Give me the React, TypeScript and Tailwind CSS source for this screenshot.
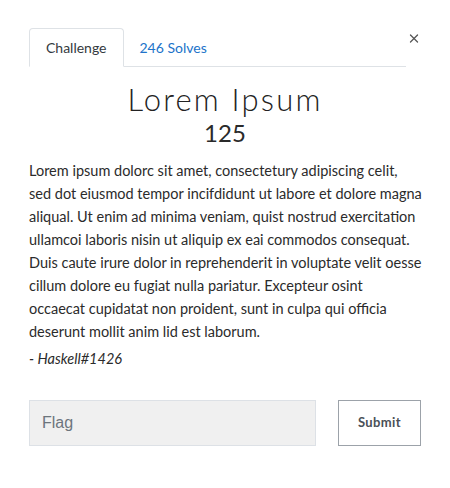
import { X } from "lucide-react";

const lines = [
  "Lorem ipsum dolorc sit amet, consectetury adipiscing celit,",
  "sed dot eiusmod tempor incifdidunt ut labore et dolore magna",
  "aliqual. Ut enim ad minima veniam, quist nostrud exercitation",
  "ullamcoi laboris nisin ut aliquip ex eai commodos consequat.",
  "Duis caute irure dolor in reprehenderit in voluptate velit oesse",
  "cillum dolore eu fugiat nulla pariatur. Excepteur osint",
  "occaecat cupidatat non proident, sunt in culpa qui officia",
  "deserunt mollit anim lid est laborum.",
];

export default function App() {
  const tabs = [
    { label: "Challenge", active: true },
    { label: "246 Solves", active: false },
  ];

  return (
    <div
      className="w-[450px] h-[488px] bg-white px-[29px] pt-[28px] text-[#212529]"
      style={{ fontFamily: "Lato, 'Open Sans', sans-serif" }}
    >
      {/* header: tabs + close */}
      <div className="flex items-start">
        <ul className="flex w-[380px] border-b border-[#dee2e6]">
          {tabs.map((tab) => (
            <li
              key={tab.label}
              className={
                tab.active
                  ? "-mb-px h-[39px] flex items-center px-4 border border-b-white border-[#dee2e6] rounded-t-[4px] bg-white text-[14px] text-[#343a40]"
                  : "h-[38px] flex items-center px-4 text-[14px] text-[#2173c9]"
              }
            >
              {tab.label}
            </li>
          ))}
        </ul>
        <button className="ml-[1px] mt-[3px] w-[14px] h-[14px] flex items-center justify-center text-[#555]">
          <X size={15} strokeWidth={2.2} />
        </button>
      </div>

      {/* title */}
      <div className="text-center mt-[13px]">
        <h2 className="text-[31px] leading-[38px] font-light tracking-[0.07em] text-[#222]">
          Lorem Ipsum
        </h2>
        <h3 className="text-[24px] leading-[30px] text-[#2a2a2a]">125</h3>
      </div>

      {/* description */}
      <div className="mt-[11px] text-[14.5px] leading-[23px] text-[#2b2b2b]">
        <p className="whitespace-nowrap">
          {lines.map((line) => (
            <span key={line} className="block">
              {line}
            </span>
          ))}
        </p>
        <p className="mt-[4px] italic">- Haskell#1426</p>
      </div>

      {/* flag form */}
      <form className="flex mt-[30px] gap-[22px]">
        <input
          type="text"
          placeholder="Flag"
          className="w-[287px] h-[46px] px-[12px] bg-[#f0f0f0] border border-[#dde1e6] text-[16px] placeholder:text-[#6c757d] outline-none"
          style={{ fontFamily: "'Liberation Sans', Arial, sans-serif" }}
        />
        <button
          type="button"
          className="w-[83px] h-[46px] border border-[#9ca2a9] bg-white text-[13px] font-bold tracking-[0.03em] text-[#4a5057]"
        >
          Submit
        </button>
      </form>
    </div>
  );
}
